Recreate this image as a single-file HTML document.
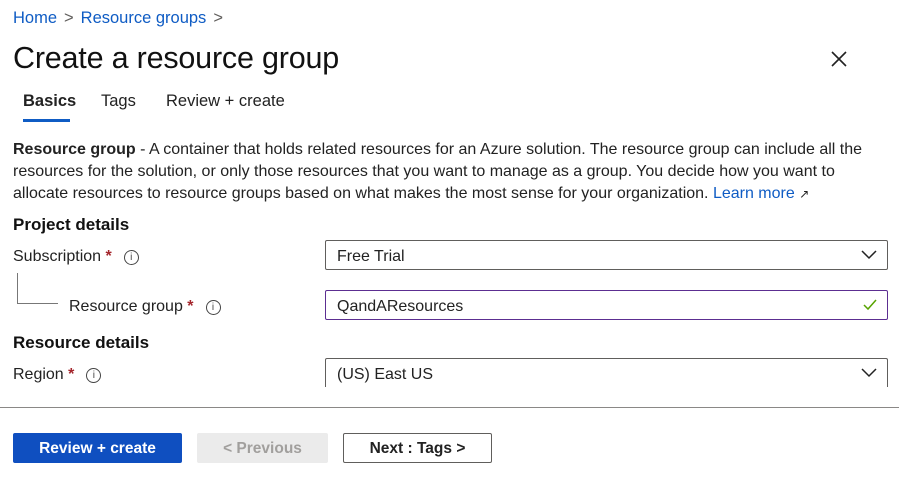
<!DOCTYPE html>
<html><head><meta charset="utf-8"><style>
body{margin:0;width:899px;height:481px;background:#fff;font-family:"Liberation Sans",sans-serif;color:#323130;position:relative;overflow:hidden}
.a{position:absolute;white-space:nowrap}
a{color:#0f5cc4;text-decoration:none}
.bc{top:9px;left:13px;font-size:16.5px;color:#0f5cc4}
.bc span{color:#605e5c;margin:0 7px}
h1{position:absolute;top:41px;left:13px;margin:0;font-size:30.5px;font-weight:normal;color:#111;letter-spacing:-0.2px}
.tab{top:92px;font-size:16.5px;color:#222}
.desc{left:13px;font-size:16px;color:#222}
.sec{left:13px;font-size:17px;font-weight:bold;color:#111}
.lbl{font-size:16px;color:#222}
.req{color:#a4262c;font-weight:bold}
.info{display:inline-block;width:13px;height:13px;border:1px solid #444;border-radius:50%;font-size:10px;text-align:center;line-height:13px;margin-left:12px;vertical-align:1px;color:#444}
.box{position:absolute;left:325px;width:563px;border:1px solid #605e5c;border-radius:2px;font-size:16px;color:#222;box-sizing:border-box;padding-left:11px;line-height:31px}
.btn{position:absolute;top:433px;height:30px;box-sizing:border-box;font-size:15.5px;font-weight:bold;text-align:center;line-height:29px;border-radius:2px}
</style></head><body>
<div class="a bc">Home<span>&gt;</span>Resource groups<span>&gt;</span></div>
<h1>Create a resource group</h1>
<svg class="a" style="left:830px;top:50px" width="18" height="18" viewBox="0 0 18 18"><path d="M2 2L16 16M16 2L2 16" stroke="#222" stroke-width="1.6"/></svg>
<div class="a tab" style="left:23px;font-weight:bold">Basics</div>
<div class="a" style="left:23px;top:119px;width:47px;height:3px;background:#0f5cc4"></div>
<div class="a tab" style="left:101px">Tags</div>
<div class="a tab" style="left:166px">Review + create</div>
<div class="a desc" style="top:141px"><b>Resource group</b> - A container that holds related resources for an Azure solution. The resource group can include all the</div>
<div class="a desc" style="top:163px">resources for the solution, or only those resources that you want to manage as a group. You decide how you want to</div>
<div class="a desc" style="top:185px">allocate resources to resource groups based on what makes the most sense for your organization. <a>Learn more</a> <span style="font-size:12px">&#x2197;</span></div>
<div class="a sec" style="top:215px">Project details</div>
<div class="a lbl" style="left:13px;top:248px">Subscription <span class="req">*</span><span class="info">i</span></div>
<div class="a" style="left:17px;top:273px;width:40px;height:30px;border-left:1px solid #777;border-bottom:1px solid #777"></div>
<div class="a lbl" style="left:69px;top:298px">Resource group <span class="req">*</span><span class="info">i</span></div>
<div class="a sec" style="top:333px">Resource details</div>
<div class="a lbl" style="left:13px;top:366px">Region <span class="req">*</span><span class="info">i</span></div>
<div class="box" style="top:240px;height:30px">Free Trial<svg style="position:absolute;right:10px;top:9px" width="16" height="10"><path d="M1 1L8 8L15 1" stroke="#222" stroke-width="1.5" fill="none"/></svg></div>
<div class="box" style="top:290px;height:30px;border-color:#5c2e91">QandAResources<svg style="position:absolute;right:10px;top:8px" width="14" height="12"><path d="M1 6L5 10L13 1" stroke="#57a300" stroke-width="1.5" fill="none"/></svg></div>
<div class="box" style="top:358px;height:29px;border-bottom:none;border-radius:2px 2px 0 0">(US) East US<svg style="position:absolute;right:10px;top:9px" width="16" height="10"><path d="M1 1L8 8L15 1" stroke="#222" stroke-width="1.5" fill="none"/></svg></div>
<div class="a" style="left:0;top:407px;width:899px;height:1px;background:#8a8886"></div>
<div class="btn" style="left:13px;width:169px;background:#0f4fc0;color:#fff;line-height:31px">Review + create</div>
<div class="btn" style="left:197px;width:131px;background:#ebebeb;color:#a19f9d;line-height:31px">&lt; Previous</div>
<div class="btn" style="left:343px;width:149px;border:1px solid #605e5c;color:#222">Next : Tags &gt;</div>
</body></html>
